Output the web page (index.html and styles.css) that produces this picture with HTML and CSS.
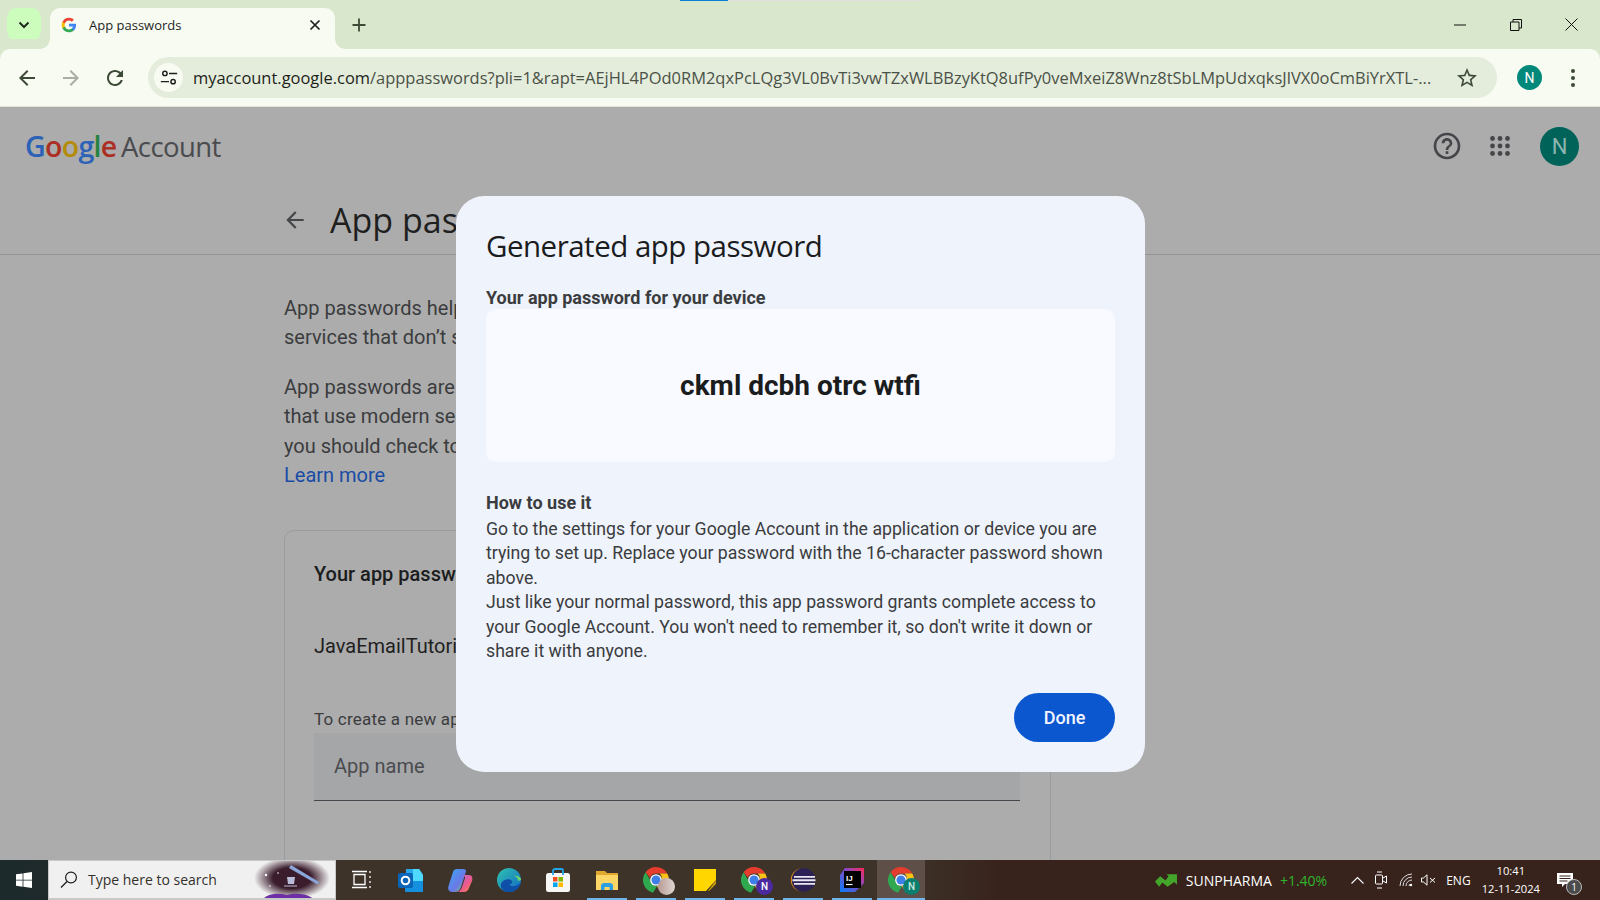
FILE: index.html
```html
<!DOCTYPE html>
<html lang="en">
<head>
    <meta charset="UTF-8">
    <meta name="viewport" content="width=device-width, initial-scale=1.0">
    <title>App passwords</title>
    <link rel="stylesheet" href="styles.css">
</head>
<body>
    <svg class="defs" width="0" height="0">
        <symbol id="google-g" viewBox="0 0 24 24">
            <path fill="#4285F4" d="M22.56 12.25c0-.78-.07-1.53-.2-2.25H12v4.26h5.92c-.26 1.37-1.04 2.53-2.21 3.31v2.77h3.57c2.08-1.92 3.28-4.74 3.28-8.09z"/>
            <path fill="#34A853" d="M12 23c2.97 0 5.46-.98 7.28-2.66l-3.57-2.77c-.98.66-2.23 1.06-3.71 1.06-2.86 0-5.29-1.93-6.16-4.53H2.18v2.84C3.99 20.53 7.7 23 12 23z"/>
            <path fill="#FBBC05" d="M5.84 14.09c-.22-.66-.35-1.36-.35-2.09s.13-1.43.35-2.09V7.07H2.18C1.43 8.55 1 10.22 1 12s.43 3.45 1.18 4.93l3.66-2.84z"/>
            <path fill="#EA4335" d="M12 5.38c1.62 0 3.06.56 4.21 1.64l3.15-3.15C17.45 2.09 14.97 1 12 1 7.7 1 3.99 3.47 2.18 7.07l3.66 2.84c.87-2.6 3.3-4.53 6.16-4.53z"/>
        </symbol>
        <symbol id="chrome" viewBox="0 0 24 24">
            <path fill="#e53c2e" d="M12 0a12 12 0 0 1 10.4 6H12a6 6 0 0 0-5.6 3.9L2.4 4.8A12 12 0 0 1 12 0z"/>
            <path fill="#fbc116" d="M22.4 6a12 12 0 0 1-5.6 17L12.9 17.9A6 6 0 0 0 17 12a6 6 0 0 0-1.6-6z"/>
            <path fill="#2fa84f" d="M2.4 4.8l5.2 9a6 6 0 0 0 5.3 4.1l-3.7 5.8A12 12 0 0 1 2.4 4.8z"/>
            <circle cx="12" cy="12" r="5.4" fill="#fff"/>
            <circle cx="12" cy="12" r="4.2" fill="#3f7fe8"/>
        </symbol>
        <symbol id="arrow-back" viewBox="0 0 24 24">
            <path d="M20 11H7.83l5.59-5.59L12 4l-8 8 8 8 1.41-1.41L7.83 13H20v-2z"/>
        </symbol>
    </svg>

    <div class="load-bar"></div>

    <div class="tabstrip">
        <div class="tab-search">
            <svg width="14" height="14" viewBox="0 0 14 14"><path d="M2.5 4.5L7 9l4.5-4.5" fill="none" stroke="#1f2a1c" stroke-width="2"/></svg>
        </div>
        <div class="tab">
            <svg class="favicon" width="16" height="16"><use href="#google-g"/></svg>
            <span class="tab-title">App passwords</span>
            <svg class="tab-close" width="12" height="12" viewBox="0 0 12 12"><path d="M1.5 1.5l9 9M10.5 1.5l-9 9" stroke="#1f1f1f" stroke-width="1.7"/></svg>
        </div>
        <svg class="new-tab" width="14" height="14" viewBox="0 0 14 14"><path d="M7 .5v13M.5 7h13" stroke="#3d4a37" stroke-width="1.8"/></svg>
        <div class="window-controls">
            <svg width="12" height="12" viewBox="0 0 12 12"><path d="M0 6h12" stroke="#111" stroke-width="1"/></svg>
            <svg width="12" height="12" viewBox="0 0 12 12"><path d="M.5 3h8.5v8.500h-8.500zM3 3V.5h8.500V9H9" fill="none" stroke="#111" stroke-width="1"/></svg>
            <svg width="13" height="13" viewBox="0 0 13 13"><path d="M.5.5l12 12M12.500.5l-12 12" stroke="#111" stroke-width="1"/></svg>
        </div>
    </div>

    <div class="toolbar">
        <svg class="tool-icon" width="24" height="24"><use href="#arrow-back"/></svg>
        <svg class="tool-icon forward" width="24" height="24"><use href="#arrow-back"/></svg>
        <svg class="tool-icon" width="24" height="24" viewBox="0 0 24 24"><path d="M17.65 6.35C16.2 4.9 14.21 4 12 4c-4.42 0-7.99 3.58-7.99 8s3.57 8 7.99 8c3.73 0 6.84-2.55 7.730-6h-2.080c-.82 2.33-3.040 4-5.650 4-3.310 0-6-2.690-6-6s2.690-6 6-6c1.660 0 3.140.69 4.220 1.780L13 11h7V4l-2.350 2.350z"/></svg>
        <div class="omnibox">
            <span class="site-info">
                <svg width="22" height="22" viewBox="0 0 22 22" fill="none" stroke="#1f1f1f" stroke-width="1.600"><circle cx="6.500" cy="6" r="2.400"/><path d="M11 6h9M2 15h9"/><circle cx="15.500" cy="15" r="2.400"/></svg>
            </span>
            <span class="url"><span class="url-host">myaccount.google.com</span>/apppasswords?pli=1&amp;rapt=AEjHL4POd0RM2qxPcLQg3VL0BvTi3vwTZxWLBBzyKtQ8ufPy0veMxeiZ8Wnz8tSbLMpUdxqksJlVX0oCmBiYrXTL-...</span>
            <svg class="star" width="24" height="24" viewBox="0 0 24 24"><path d="M22 9.240l-7.190-.620L12 2 9.190 8.630 2 9.240l5.460 4.730L5.820 21 12 17.270 18.180 21l-1.630-7.030L22 9.240zM12 15.400l-3.760 2.270 1-4.280-3.320-2.880 4.380-.380L12 6.100l1.710 4.040 4.380.380-3.320 2.880 1 4.280L12 15.400z"/></svg>
        </div>
        <span class="profile-small">N</span>
        <svg class="menu-dots" width="6" height="20" viewBox="0 0 6 20"><circle cx="3" cy="3" r="2"/><circle cx="3" cy="10" r="2"/><circle cx="3" cy="17" r="2"/></svg>
    </div>

    <div class="page">
        <header class="account-header">
            <div class="logo"><span class="logo-google"><span class="g-blue">G</span><span class="g-red">o</span><span class="g-yellow">o</span><span class="g-blue">g</span><span class="g-green">l</span><span class="g-red">e</span></span> <span class="logo-account">Account</span></div>
            <div class="header-actions">
                <svg width="32" height="32" viewBox="0 0 24 24"><path d="M11 18h2v-2h-2v2zm1-16C6.480 2 2 6.480 2 12s4.480 10 10 10 10-4.480 10-10S17.520 2 12 2zm0 18c-4.410 0-8-3.590-8-8s3.590-8 8-8 8 3.590 8 8-3.590 8-8 8zm0-14c-2.210 0-4 1.790-4 4h2c0-1.100.9-2 2-2s2 .9 2 2c0 2-3 1.750-3 5h2c0-2.250 3-2.500 3-5 0-2.210-1.790-4-4-4z"/></svg>
                <svg class="apps" width="20" height="20" viewBox="0 0 20 20"><circle cx="2.500" cy="2.500" r="2.400"/><circle cx="10" cy="2.500" r="2.400"/><circle cx="17.500" cy="2.500" r="2.400"/><circle cx="2.500" cy="10" r="2.400"/><circle cx="10" cy="10" r="2.400"/><circle cx="17.500" cy="10" r="2.400"/><circle cx="2.500" cy="17.500" r="2.400"/><circle cx="10" cy="17.500" r="2.400"/><circle cx="17.500" cy="17.500" r="2.400"/></svg>
                <span class="profile-big">N</span>
            </div>
        </header>

        <div class="title-row">
            <svg width="26" height="26"><use href="#arrow-back"/></svg>
            <h1>App passwords</h1>
        </div>

        <main class="content">
            <p>App passwords help you sign in to your Google Account on older apps and<br>services that don’t support modern security standards.</p>
            <p>App passwords are less secure than using up-to-date apps and services<br>that use modern security standards. Before you create an app password,<br>you should check to see if your app needs this in order to sign in.<br><a href="#">Learn more</a></p>
            <section class="card">
                <h2>Your app passwords</h2>
                <div class="app-row">JavaEmailTutorial</div>
                <label class="new-label">To create a new app specific password, type a name for it below...</label>
                <div class="app-input">App name</div>
            </section>
        </main>

        <div class="dialog">
            <h3>Generated app password</h3>
            <div class="dialog-label">Your app password for your device</div>
            <div class="password-box">ckml dcbh otrc wtfi</div>
            <div class="howto">
                <strong>How to use it</strong>
                <div>Go to the settings for your Google Account in the application or device you are trying to set up. Replace your password with the 16-character password shown above.</div>
                <div>Just like your normal password, this app password grants complete access to your Google Account. You won't need to remember it, so don't write it down or share it with anyone.</div>
            </div>
            <div class="dialog-actions"><button class="done">Done</button></div>
        </div>
    </div>

    <footer class="taskbar">
        <div class="start">
            <svg width="16" height="16" viewBox="0 0 16 16" fill="#fff"><path d="M0 2.300l6.600-.9v6.300H0zM7.400 1.300L16 0v7.700H7.400zM0 8.400h6.600v6.300L0 13.800zM7.400 8.400H16V16l-8.600-1.200z"/></svg>
        </div>
        <div class="searchbox">
            <svg width="18" height="18" viewBox="0 0 18 18" fill="none" stroke="#1d1d1d" stroke-width="1.200"><circle cx="11" cy="6.500" r="5.400"/><path d="M7 10.500L1 16.500"/></svg>
            <span>Type here to search</span>
            <svg class="doodle" width="76" height="40" viewBox="0 0 76 40">
                <defs><radialGradient id="space"><stop offset="0.500" stop-color="#3a1c2c"/><stop offset="1" stop-color="#3a1c2c" stop-opacity="0"/></radialGradient></defs>
                <ellipse cx="38" cy="17" rx="38" ry="21" fill="url(#space)"/>
                <path d="M37 4l28 17-1.500 2.500L35 7z" fill="#8aa5d8"/>
                <path d="M33 16h8l-1 7h-6z" fill="#b9bdd8"/>
                <path d="M30 25h13" stroke="#b9bdd8"/>
                <circle cx="12" cy="14" r="1.200" fill="#fff"/><circle cx="24" cy="12" r=".8" fill="#fff"/><circle cx="16" cy="25" r=".8" fill="#fff"/>
                <path d="M8 40c2-6 14-9 25-6 10-3 24-1 28 6z" fill="#6c2fa4"/>
            </svg>
        </div>
        <div class="task-apps">
            <div class="task-app">
                <svg width="22" height="22" viewBox="0 0 22 22" fill="none" stroke="#fff" stroke-width="1.300"><path d="M3 5.500h11v10H3zM1 2.500h15M1 18.500h15M19 2v2M19 7v2M19 12v2M19 17v2"/></svg>
            </div>
            <div class="task-app">
                <svg width="26" height="26" viewBox="0 0 26 26"><path d="M8 2h13l4 6v15a2 2 0 0 1-2 2H9a2 2 0 0 1-2-2z" fill="#28a8ea"/><path d="M15 2h6l4 6v6h-10z" fill="#50d9ff"/><path d="M7 14h18v11H9a2 2 0 0 1-2-2z" fill="#1490df"/><rect x="0" y="6" width="15" height="15" rx="2" fill="#0a64b8"/><circle cx="7.500" cy="13.500" r="3.800" fill="none" stroke="#fff" stroke-width="2"/></svg>
            </div>
            <div class="task-app">
                <svg width="26" height="26" viewBox="0 0 26 26"><defs><linearGradient id="cp" x1="0" y1="0" x2="1" y2="1"><stop offset="0" stop-color="#3aa8f0"/><stop offset=".6" stop-color="#6a78e8"/><stop offset="1" stop-color="#7cd060"/></linearGradient><linearGradient id="cp2" x1="0" y1="0" x2="1" y2="1"><stop offset="0" stop-color="#b06ae0"/><stop offset=".6" stop-color="#ec5a8c"/><stop offset="1" stop-color="#f28a3c"/></linearGradient></defs><path d="M10 2h6c2 0 3.500 1 3 2.500L14 20c-1 3-3 5-6 5H5c-3 0-4.500-3-3.500-6L6 5c.6-2 2-3 4-3z" fill="url(#cp)"/><path d="M14 8h8c3 0 4 3 3 6l-3 7c-.8 2.500-2.500 4-5 4H9c3 0 5-2 6-5l3-9c.3-1.500-1-3-4-3z" fill="url(#cp2)"/></svg>
            </div>
            <div class="task-app">
                <svg width="26" height="26" viewBox="0 0 26 26"><defs><linearGradient id="edge" x1="0" y1="0" x2="1" y2="1"><stop offset="0" stop-color="#2fc4b0"/><stop offset="1" stop-color="#1368c4"/></linearGradient></defs><circle cx="13" cy="13" r="12" fill="url(#edge)"/><path d="M13 25C6 25 3 19 6 15c2-3 8-4 10-1 1 2-1 4-3 3 3 4 9 2 12-2-1 6-6 10-12 10z" fill="#0e4fa8"/><path d="M25 13c0-3-4-5-8-4 3 0 5 2 5 5l3-1z" fill="#6bd86b"/></svg>
            </div>
            <div class="task-app">
                <svg width="26" height="26" viewBox="0 0 26 26"><rect x="1" y="6" width="24" height="19" rx="2.500" fill="#f6f6f6"/><path d="M8 8V3.500C8 2.500 9 2 10 2h6c1 0 2 .5 2 1.500V8" fill="none" stroke="#22a5e8" stroke-width="1.800"/><rect x="8" y="10" width="4.500" height="4.500" fill="#f25022"/><rect x="13.500" y="10" width="4.500" height="4.500" fill="#7fba00"/><rect x="8" y="15.500" width="4.500" height="4.500" fill="#00a4ef"/><rect x="13.500" y="15.500" width="4.500" height="4.500" fill="#ffb900"/></svg>
            </div>
            <div class="task-app open">
                <svg width="24" height="24" viewBox="0 0 24 24"><path d="M1 3h9l2 2h11v17H1z" fill="#e0a82e"/><path d="M1 7h22v15H1z" fill="#fcd768"/><path d="M6 22v-5l2-2h8l2 2v5h-3.500v-3h-5v3z" fill="#2d9fe0"/></svg>
            </div>
            <div class="task-app open">
                <svg width="26" height="26"><use href="#chrome"/></svg>
                <span class="app-badge photo"></span>
            </div>
            <div class="task-app open">
                <svg width="24" height="24" viewBox="0 0 24 24"><path d="M1 1h22v15l-7 7H1z" fill="#ffd600"/><path d="M23 12v5a6 6 0 0 1-6 6h-4l10-11z" fill="#3a3520"/><path d="M15 23l8-11v4l-7 7z" fill="#c99a10"/></svg>
            </div>
            <div class="task-app open">
                <svg width="26" height="26"><use href="#chrome"/></svg>
                <span class="app-badge purple">N</span>
            </div>
            <div class="task-app open">
                <svg width="26" height="26" viewBox="0 0 26 26"><circle cx="13.500" cy="13" r="11.800" fill="#2c2255"/><path d="M11 1.300A11.800 11.800 0 0 0 11 24.700 12 12 0 0 1 11 1.300z" fill="#f7941e"/><path d="M4 9h21v1.800H4zM2.500 12.200h23v2H2.500zM4 16h21v1.800H4z" fill="#e9e9f2"/></svg>
            </div>
            <div class="task-app open">
                <svg width="26" height="26" viewBox="0 0 26 26"><defs><linearGradient id="ij" x1="0" y1="1" x2="1" y2="0"><stop offset="0" stop-color="#087cfa"/><stop offset=".6" stop-color="#8b47c2"/><stop offset="1" stop-color="#fe2857"/></linearGradient></defs><path d="M6 1h19v15l-9 9H1V8z" fill="url(#ij)"/><rect x="5" y="4" width="17" height="17" fill="#000"/><text x="7" y="13.500" class="ij-text">IJ</text><path d="M7 17.500h6.500" stroke="#fff" stroke-width="1.200"/></svg>
            </div>
            <div class="task-app open active">
                <svg width="26" height="26"><use href="#chrome"/></svg>
                <span class="app-badge teal">N</span>
            </div>
        </div>
        <div class="tray">
            <div class="ticker">
                <svg width="23" height="14" viewBox="0 0 22 13" fill="#43a62a"><path d="M0 8l5-5 5 4 3-4-2-2h10v10l-2.500-2.500L12 13 7 9l-3 4z"/></svg>
                <span>SUNPHARMA</span>
                <span class="ticker-up">+1.40%</span>
            </div>
            <svg class="tray-chevron" width="13" height="8" viewBox="0 0 13 8"><path d="M.5 7.500l6-6 6 6" fill="none" stroke="#fff" stroke-width="1.100"/></svg>
            <svg class="tray-meet" width="12" height="18" viewBox="0 0 12 18" fill="none" stroke="#fff" stroke-width="1"><rect x=".5" y="4" width="7" height="9" rx="1"/><path d="M8 7l3.500-2v7L8 10M2 1h5M2 17h5"/></svg>
            <svg class="tray-wifi" width="14" height="14" viewBox="0 0 14 14" fill="none" stroke="#ddd" stroke-width="1"><path d="M1 13a12 12 0 0 1 12-12M4 13a9 9 0 0 1 9-9M7 13a6 6 0 0 1 6-6M10 13a3 3 0 0 1 1-2"/><circle cx="12" cy="12" r="1.200" fill="#fff" stroke="none"/></svg>
            <svg class="tray-sound" width="15" height="12" viewBox="0 0 15 12" fill="none" stroke="#fff" stroke-width="1"><path d="M.5 4h2L6 .8v10.400L2.500 8h-2zM9 4l5 4.500M14 4l-5 4.500"/></svg>
            <span class="lang">ENG</span>
            <div class="clock"><span>10:41</span><span>12-11-2024</span></div>
            <div class="notify">
                <svg width="16" height="15" viewBox="0 0 16 15"><path d="M0 0h16v11H8l-3 3v-3H0z" fill="#fff"/><path d="M2.500 3h11M2.500 5.500h11M2.500 8h8" stroke="#38231c"/></svg>
                <span class="notify-count">1</span>
            </div>
        </div>
    </footer>
</body>
</html>
```

FILE: styles.css
```css
* { box-sizing: border-box; }
html, body { margin: 0; height: 100%; }
body { display: flex; flex-direction: column; width: 1600px; height: 900px; overflow: hidden; font-family: Roboto, Arial, sans-serif; background: #acacac; position: relative; }
.defs { position: absolute; }
.load-bar { position: absolute; left: 680px; top: 0; width: 241px; height: 1px; background: linear-gradient(90deg, #0a7fd6 48px, #e2e2e2 48px); }

/* browser chrome */
.tabstrip { height: 49px; flex: none; display: flex; align-items: flex-end; background: #d9e8cd; }
.tab-search { width: 34px; height: 33px; margin: 0 9px 8px 7px; background: #cdfdbc; border-radius: 10px; display: flex; align-items: center; justify-content: center; }
.tab { width: 285px; height: 41px; background: #f8fbf1; border-radius: 10px 10px 0 0; display: flex; align-items: center; padding: 0 14px 7px 11px; position: relative; }
.tab::before, .tab::after { content: ""; position: absolute; bottom: 0; width: 10px; height: 10px; background: radial-gradient(circle at 0 0, #d9e8cd 9.500px, #f8fbf1 10px); }
.tab::before { left: -10px; }
.tab::after { right: -10px; transform: scaleX(-1); }
.favicon { flex: none; margin-right: 12px; }
.tab-title { font-family: "Open Sans", sans-serif; font-size: 13px; color: #1f1f1f; flex: 1; }
.new-tab { margin: 0 0 17px 17px; }
.window-controls { margin-left: auto; width: 170px; height: 49px; display: flex; align-items: center; justify-content: space-between; padding: 0 22px 0 24px; align-self: flex-start; }

.toolbar { height: 58px; flex: none; display: flex; align-items: center; background: #f8fbf1; border-bottom: 1px solid #e4e6dd; border-radius: 10px 10px 0 0; padding: 0 0 0 15px; box-shadow: 0 -10px 0 #d9e8cd; }
.tool-icon { fill: #3d4a37; margin-right: 20px; flex: none; }
.forward { fill: #a9ada4; transform: scaleX(-1); }
.omnibox { width: 1349px; height: 41px; margin-left: 1px; background: #e4ecdc; border-radius: 21px; display: flex; align-items: center; padding: 0 18px 0 6px; }
.site-info { width: 29px; height: 29px; background: #f8fbf1; border-radius: 50%; display: flex; align-items: center; justify-content: center; flex: none; }
.site-info svg { width: 20px; height: 20px; }
.url { font-family: "Open Sans", sans-serif; font-size: 16.470px; color: #4a5146; margin-left: 10px; white-space: nowrap; flex: 1; overflow: hidden; }
.url-host { color: #1c1f1a; }
.star { fill: #3d4a37; flex: none; }
.profile-small { width: 25px; height: 25px; margin-left: 20px; border-radius: 50%; background: #00897b; color: #fff; font-size: 14px; display: flex; align-items: center; justify-content: center; flex: none; }
.menu-dots { fill: #3d4a37; margin-left: 28px; flex: none; }

/* page behind the dialog */
.page { flex: 1; position: relative; overflow: hidden; background: #acacac; }
.account-header { height: 78px; display: flex; align-items: center; justify-content: space-between; padding: 0 21px 0 25px; }
.logo { font-family: "Open Sans", sans-serif; font-size: 27.500px; letter-spacing: -0.6px; color: #444; }
.logo-google { font-size: 28.500px; font-weight: 600; letter-spacing: -0.7px; }
.g-blue { color: #2b62b8; }
.g-red { color: #ab2f24; }
.g-yellow { color: #b58b0a; }
.g-green { color: #278241; }
.logo-account { color: #4a4b4e; margin-left: -2px; }
.header-actions { display: flex; align-items: center; fill: #45464a; }
.apps { margin-left: 27px; }
.profile-big { width: 39px; height: 39px; margin-left: 30px; border-radius: 50%; background: #00635a; color: #8db5af; font-size: 22px; display: flex; align-items: center; justify-content: center; }
.title-row { height: 70px; display: flex; align-items: center; padding: 0 0 0 282px; border-bottom: 1px solid #929396; fill: #45464a; }
.title-row h1 { margin: 0 0 0 22px; font-size: 34px; font-weight: 400; color: #1f1f1f; font-family: "Open Sans", sans-serif; }
.content { margin-left: 284px; width: 767px; padding-top: 39px; color: #3b3c3e; font-size: 20px; line-height: 29.400px; }
.content p { margin: 0 0 20px; white-space: nowrap; }
.content a { color: #1a4ca6; text-decoration: none; }
.card { margin-top: 40px; height: 360px; border: 1px solid #9a9b9c; border-radius: 10px; padding: 29px 30px 28px 29px; }
.card h2 { margin: 0; font-size: 20px; font-weight: 500; color: #1b1c1d; }
.app-row { margin-top: 42px; color: #1f1f1f; }
.new-label { display: block; margin-top: 47px; font-size: 17px; letter-spacing: 0.2px; line-height: 22px; color: #3b3c3e; white-space: nowrap; }
.app-input { height: 68px; margin-top: 3px; background: #a5a6a8; border-bottom: 1px solid #44474b; padding: 19px 20px; color: #4a4b4f; }

.dialog { position: absolute; left: 456px; top: 89px; width: 689px; height: 576px; padding: 30px; background: #eef3fc; border-radius: 28px; display: flex; flex-direction: column; }
.dialog h3 { margin: 0; font-family: "Open Sans", sans-serif; font-size: 29.500px; line-height: 40px; font-weight: 400; color: #1b1c1e; letter-spacing: -0.5px; }
.dialog-label { margin-top: 20px; font-size: 18px; line-height: 23px; font-weight: 700; color: #3b3c3e; }
.password-box { height: 153px; background: #f8faff; border-radius: 10px; display: flex; align-items: center; justify-content: center; font-size: 28px; font-weight: 700; color: #1b1c1e; }
.howto { margin-top: 29px; font-size: 17.700px; line-height: 24.400px; color: #3b3c3e; }
.howto strong { display: block; font-size: 18px; font-weight: 700; margin-bottom: 1.500px; }
.dialog-actions { margin-top: auto; display: flex; justify-content: flex-end; }
.done { width: 101px; height: 49px; border: 0; border-radius: 25px; background: #0b57d0; color: #f2f5fd; font-family: Roboto, sans-serif; font-size: 18px; font-weight: 500; }

/* windows taskbar */
.taskbar { height: 40px; flex: none; display: flex; align-items: stretch; background: linear-gradient(90deg, #1c2a2c 0, #1f2a2b 48px, #3d3329 340px, #3d3329 900px, #38231c 1000px); color: #fff; }
.start { width: 48px; display: flex; align-items: center; justify-content: center; }
.searchbox { width: 288px; background: #f0f0f0; border: 1px solid #c9c9c9; border-bottom-width: 2px; display: flex; align-items: center; padding-left: 11px; color: #33302c; font-size: 14px; font-family: "Open Sans", sans-serif; position: relative; overflow: hidden; }
.searchbox span { margin-left: 10px; }
.doodle { position: absolute; right: 5px; top: 0; }
.task-apps { display: flex; padding-left: 1px; }
.task-app { width: 49px; display: flex; align-items: center; justify-content: center; position: relative; }
.task-app.open::after { content: ""; position: absolute; left: 5px; right: 4px; bottom: 0; height: 2px; background: #6db5ea; }
.task-app.active { background: #5e5048; width: 48px; margin-left: 1px; }
.task-app.active::after { left: 0; right: 0; }
.app-badge { position: absolute; right: 5px; bottom: 5px; width: 17px; height: 17px; border-radius: 50%; font-size: 10px; font-weight: 500; display: flex; align-items: center; justify-content: center; }
.photo { background: linear-gradient(90deg, #b89a94, #dfd8d4); }
.purple { background: #4b2aa0; }
.teal { background: #0b7f6d; color: #c8e8e0; }
.ij-text { fill: #fff; font-family: "Liberation Sans", sans-serif; font-size: 8px; font-weight: 700; }
.tray { margin-left: auto; display: flex; align-items: center; font-family: "Open Sans", sans-serif; font-size: 14px; }
.ticker { display: flex; align-items: center; gap: 8px; margin-right: 24px; }
.ticker-up { color: #2fb52a; }
.tray-chevron { margin-right: 11px; }
.tray-meet { margin-right: 12px; }
.tray-wifi { margin-right: 8px; }
.tray-sound { margin-right: 11px; }
.lang { font-size: 12px; margin: 0 11px 0 -1px; }
.clock { display: flex; flex-direction: column; align-items: center; font-size: 11.200px; line-height: 18px; margin-right: 11px; }
.notify { width: 34px; height: 40px; margin-right: 15px; position: relative; display: flex; align-items: center; padding-left: 6px; }
.notify-count { position: absolute; left: 15px; top: 19px; width: 16px; height: 16px; border-radius: 50%; background: #4b4b4b; border: 1px solid #bbb; font-size: 10px; display: flex; align-items: center; justify-content: center; }
```
